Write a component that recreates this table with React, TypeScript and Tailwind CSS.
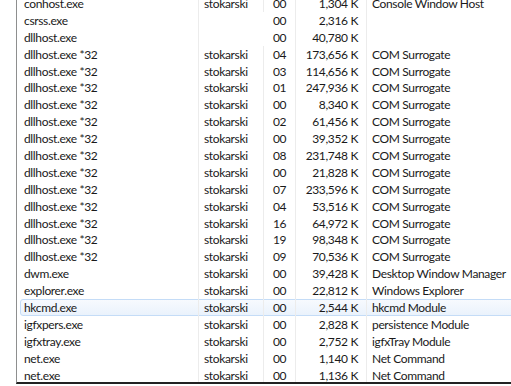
type Proc = {
  name: string;
  user: string;
  cpu: string;
  mem: string;
  desc: string;
  hot?: boolean;
};

const surrogates: [string, string][] = [
  ["04", "173,656"],
  ["03", "114,656"],
  ["01", "247,936"],
  ["00", "8,340"],
  ["02", "61,456"],
  ["00", "39,352"],
  ["08", "231,748"],
  ["00", "21,828"],
  ["07", "233,596"],
  ["04", "53,516"],
  ["16", "64,972"],
  ["19", "98,348"],
  ["09", "70,536"],
];

const procs: Proc[] = [
  { name: "conhost.exe", user: "stokarski", cpu: "00", mem: "1,304 K", desc: "Console Window Host" },
  { name: "csrss.exe", user: "", cpu: "00", mem: "2,316 K", desc: "" },
  { name: "dllhost.exe", user: "", cpu: "00", mem: "40,780 K", desc: "" },
  ...surrogates.map(([cpu, mem]) => ({
    name: "dllhost.exe *32",
    user: "stokarski",
    cpu,
    mem: `${mem} K`,
    desc: "COM Surrogate",
  })),
  { name: "dwm.exe", user: "stokarski", cpu: "00", mem: "39,428 K", desc: "Desktop Window Manager" },
  { name: "explorer.exe", user: "stokarski", cpu: "00", mem: "22,812 K", desc: "Windows Explorer" },
  { name: "hkcmd.exe", user: "stokarski", cpu: "00", mem: "2,544 K", desc: "hkcmd Module", hot: true },
  { name: "igfxpers.exe", user: "stokarski", cpu: "00", mem: "2,828 K", desc: "persistence Module" },
  { name: "igfxtray.exe", user: "stokarski", cpu: "00", mem: "2,752 K", desc: "igfxTray Module" },
  { name: "net.exe", user: "stokarski", cpu: "00", mem: "1,140 K", desc: "Net Command" },
  { name: "net.exe", user: "stokarski", cpu: "00", mem: "1,136 K", desc: "Net Command" },
];

export default function App() {
  return (
    <div
      className="flex h-[386px] w-[511px] overflow-hidden bg-white text-[12px] tracking-[-0.35px] text-[#1a1a1a]"
      style={{ fontFamily: 'Lato, "Liberation Sans", sans-serif' }}
    >
      <div className="w-4 shrink-0" />
      {/* Process list */}
      <div className="h-[384px] flex-1 overflow-hidden border-b-2 border-l border-b-[#222] border-l-[#8e8f8f]">
        <div className="-mt-[5px]">
          {procs.map((p, i) => (
            <ProcRow key={i} p={p} />
          ))}
        </div>
      </div>
    </div>
  );
}

function ProcRow({ p }: { p: Proc }) {
  return (
    <div className="relative flex h-[16.9px] items-center leading-[17px]">
      {p.hot && (
        <div className="absolute inset-y-0 left-[3px] -right-2 rounded-[3px] border border-[#c4dcf7] bg-gradient-to-b from-[#f7fafe] to-[#eaf2fc]" />
      )}
      <div className="relative w-[182px] shrink-0 border-r border-[#ececec] pl-[7px] whitespace-nowrap">
        {p.name}
      </div>
      <div className="relative w-[65px] shrink-0 border-r border-[#ececec] pl-[5px]">
        {p.user}
      </div>
      <div className="relative w-[32px] shrink-0 border-r border-[#ececec] pl-[9px]">
        {p.cpu}
      </div>
      <div className="relative w-[71px] shrink-0 border-r border-[#ececec] pr-[8px] text-right">
        {p.mem}
      </div>
      <div className="relative flex-1 pl-[5px] whitespace-nowrap">{p.desc}</div>
    </div>
  );
}
